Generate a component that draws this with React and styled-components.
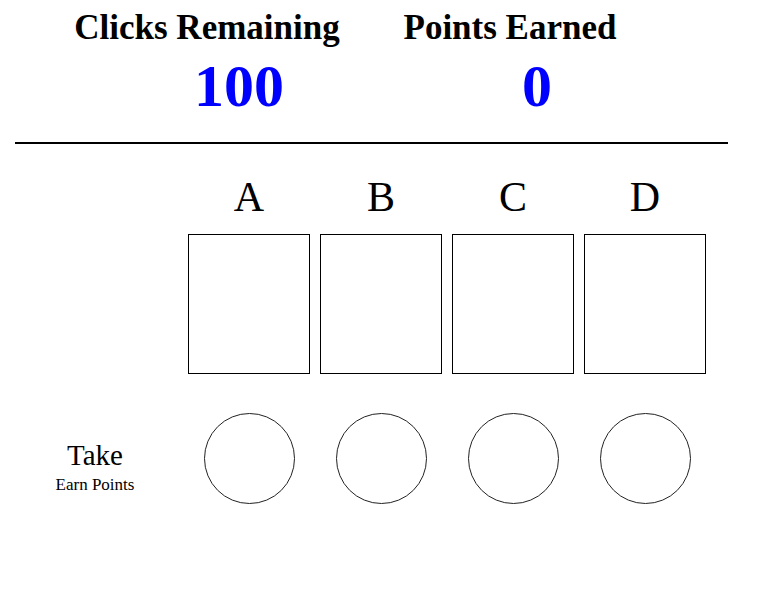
import React from "react";
import styled, { createGlobalStyle } from "styled-components";

const Global = createGlobalStyle`
  html, body { margin: 0; padding: 0; background: #fff; }
  body { font-family: "Liberation Serif", "Times New Roman", serif; color: #000; }
`;

const serif = `"Liberation Serif", "Times New Roman", serif`;

const Page = styled.div`
  display: flex;
  flex-direction: column;
  width: 784px;
  font-family: ${serif};
`;

const StatsRow = styled.div`
  display: grid;
  grid-template-columns: ${(p) => p.$cols};
  column-gap: ${(p) => p.$gap}px;
  padding-left: ${(p) => p.$left}px;
  margin-top: ${(p) => p.$top}px;
  justify-items: center;
`;

const StatLabel = styled.h2`
  margin: 0;
  font-family: ${serif};
  font-size: 35px;
  line-height: 40px;
  font-weight: bold;
  white-space: nowrap;
`;

const StatValue = styled.div`
  font-family: ${serif};
  font-size: 60px;
  line-height: 60px;
  font-weight: bold;
  color: #0000ff;
`;

const Rule = styled.hr`
  margin: 26px 0 0 15px;
  width: 713px;
  height: 0;
  border: none;
  border-top: 2px solid #000;
`;

const Board = styled.div`
  display: grid;
  grid-template-columns: 163px repeat(4, 122px);
  column-gap: 10px;
  padding-left: 15px;
  margin-top: 29px;
`;

const Letter = styled.div`
  font-family: ${serif};
  font-size: 42px;
  line-height: 48px;
  text-align: center;
`;

const Box = styled.div`
  box-sizing: border-box;
  width: 122px;
  height: 140px;
  border: 1px solid #000;
  margin-top: 13px;
`;

const RowLabel = styled.div`
  display: flex;
  flex-direction: column;
  align-items: center;
  padding-right: 3px;
  margin-top: 65px;
  font-family: ${serif};
`;

const Take = styled.div`
  font-family: ${serif};
  font-size: 29px;
  line-height: 32px;
`;

const Earn = styled.div`
  font-family: ${serif};
  font-size: 17px;
  line-height: 20px;
  margin-top: 4px;
`;

const CircleCell = styled.div`
  display: flex;
  justify-content: center;
  margin-top: 39px;
`;

const Circle = styled.button`
  box-sizing: border-box;
  width: 91px;
  height: 91px;
  border-radius: 50%;
  border: 1px solid #222;
  background: #fff;
  padding: 0;
  cursor: pointer;
`;

const options = ["A", "B", "C", "D"];

export default function App() {
  return (
    <Page>
      <Global />
      <StatsRow $cols="300px 300px" $gap={3} $left={57} $top={8}>
        <StatLabel>Clicks Remaining</StatLabel>
        <StatLabel>Points Earned</StatLabel>
      </StatsRow>
      <StatsRow $cols="260px 260px" $gap={38} $left={109} $top={8}>
        <StatValue>100</StatValue>
        <StatValue>0</StatValue>
      </StatsRow>
      <Rule />
      <Board>
        <div />
        {options.map((o) => (
          <Letter key={o}>{o}</Letter>
        ))}
        <div />
        {options.map((o) => (
          <Box key={o} />
        ))}
        <RowLabel>
          <Take>Take</Take>
          <Earn>Earn Points</Earn>
        </RowLabel>
        {options.map((o) => (
          <CircleCell key={o}>
            <Circle aria-label={`Take ${o}`} />
          </CircleCell>
        ))}
      </Board>
    </Page>
  );
}
